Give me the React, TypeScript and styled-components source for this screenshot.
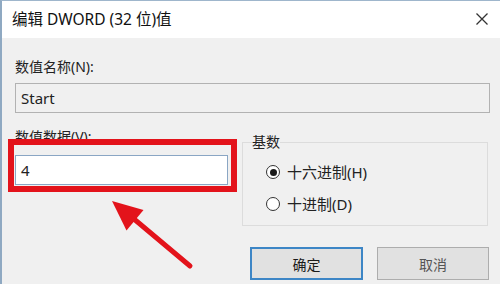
import React from "react";
import styled, { createGlobalStyle } from "styled-components";

const GlobalStyle = createGlobalStyle`
	html, body {
		margin: 0;
		padding: 0;
		background: #f0f0f0;
	}
	* {
		box-sizing: border-box;
	}
`;

const font = `"Noto Sans", "Noto Sans CJK SC", sans-serif`;

const DialogWindow = styled.div`
	position: relative;
	width: 500px;
	height: 284px;
	overflow: hidden;
	background: #f0f0f0;
	border-top: 1px solid #9fb6cc;
	border-left: 2px solid #8fa9c2;
	font-family: ${font};
	color: #1a1a1a;
`;

const TitleBar = styled.div`
	height: 37px;
	background: #ffffff;
	display: flex;
	align-items: center;
	justify-content: space-between;
	padding: 0 11px 2px 10px;
`;

const Title = styled.span`
	font-size: 15.5px;
	color: #111;
`;

const CloseButton = styled.span`
	display: flex;
	width: 14px;
	height: 14px;
`;

const Body = styled.div`
	padding: 19px 10px 0 13px;
`;

const FieldLabel = styled.div`
	font-size: 14px;
	line-height: 20px;
	color: #222;
`;

const TextBox = styled.div<{ $active?: boolean }>`
	height: 30px;
	display: flex;
	align-items: center;
	padding-left: 5px;
	font-size: 15px;
	color: #222;
	background: ${(p) => (p.$active ? "#ffffff" : "#f0f0f0")};
	border: 1px solid ${(p) => (p.$active ? "#8aa6c4" : "#b2b2b2")};
`;

const NameBox = styled(TextBox)`
	margin-top: 6px;
`;

const DataRow = styled.div`
	display: grid;
	grid-template-columns: 213px 246px;
	column-gap: 14px;
	margin-top: 14px;
	align-items: start;
`;

const DataColumn = styled.div`
	display: flex;
	flex-direction: column;
	gap: 8px;
`;

const BaseGroup = styled.fieldset`
	margin: 5px 0 0;
	padding: 10px 0 0 23px;
	height: 94px;
	border: 1px solid #dcdcdc;
	display: flex;
	flex-direction: column;
	gap: 12px;
`;

const GroupTitle = styled.legend`
	font-size: 14px;
	line-height: 20px;
	padding: 0;
	margin-left: -14px;
	color: #222;
`;

const RadioRow = styled.label`
	display: flex;
	align-items: center;
	gap: 7px;
	font-size: 15px;
	line-height: 20px;
	color: #222;
`;

const RadioDot = styled.span<{ $checked?: boolean }>`
	width: 14px;
	height: 14px;
	border-radius: 50%;
	border: 1px solid #333;
	background: #fff;
	display: flex;
	align-items: center;
	justify-content: center;

	&::after {
		content: "";
		width: 7px;
		height: 7px;
		border-radius: 50%;
		background: ${(p) => (p.$checked ? "#1a1a1a" : "transparent")};
	}
`;

const ButtonRow = styled.div`
	display: flex;
	justify-content: flex-end;
	gap: 14px;
	margin-top: 21px;
	padding-right: 1px;
`;

const DialogButton = styled.button<{ $primary?: boolean }>`
	width: ${(p) => (p.$primary ? "113px" : "112px")};
	height: 33px;
	font-family: ${font};
	font-size: 14px;
	color: ${(p) => (p.$primary ? "#1a1a1a" : "#555")};
	background: #e1e1e1;
	border: ${(p) => (p.$primary ? "2px solid #3d86c6" : "1px solid #adadad")};
	padding: 0;
`;

const Highlight = styled.div`
	position: absolute;
	left: 6px;
	top: 138px;
	width: 229px;
	height: 53px;
	border: 6px solid #e3131b;
	pointer-events: none;
`;

const Arrow = styled.svg`
	position: absolute;
	left: 0;
	top: 0;
	pointer-events: none;
`;

const App: React.FC = () => {
	return (
		<>
			<GlobalStyle />
			<DialogWindow>
				<TitleBar>
					<Title>编辑 DWORD (32 位)值</Title>
					<CloseButton>
						<svg width="14" height="14" viewBox="0 0 14 14">
							<path d="M1.5 1.5 L12.5 12.5 M12.5 1.5 L1.5 12.5" stroke="#333" strokeWidth="1.3" />
						</svg>
					</CloseButton>
				</TitleBar>
				<Body>
					<FieldLabel>数值名称(N):</FieldLabel>
					<NameBox>Start</NameBox>
					<DataRow>
						<DataColumn>
							<FieldLabel>数值数据(V):</FieldLabel>
							<TextBox $active>4</TextBox>
						</DataColumn>
						<BaseGroup>
							<GroupTitle>基数</GroupTitle>
							<RadioRow>
								<RadioDot $checked />
								十六进制(H)
							</RadioRow>
							<RadioRow>
								<RadioDot />
								十进制(D)
							</RadioRow>
						</BaseGroup>
					</DataRow>
					<ButtonRow>
						<DialogButton $primary>确定</DialogButton>
						<DialogButton>取消</DialogButton>
					</ButtonRow>
				</Body>
				<Highlight />
				<Arrow width="500" height="284" viewBox="0 0 500 284">
					<line x1="132" y1="218" x2="188" y2="265" stroke="#e3131b" strokeWidth="5" strokeLinecap="round" />
					<polygon points="110,200 124.5,229.5 141.5,209" fill="#e3131b" />
				</Arrow>
			</DialogWindow>
		</>
	);
};

export default App;
